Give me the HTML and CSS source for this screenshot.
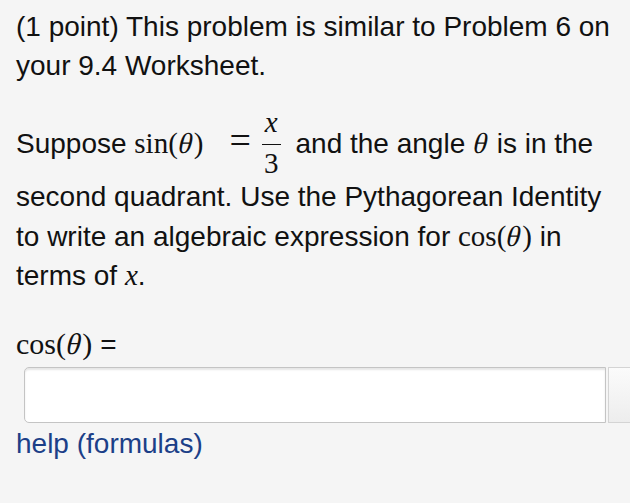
FILE: index.html
```html
<!DOCTYPE html>
<html>
<head>
<meta charset="utf-8">
<link rel="stylesheet" href="styles.css">
</head>
<body>
<div class="problem">
  <p class="para">(1 point) This problem is similar to Problem 6 on your 9.4 Worksheet.</p>
  <p class="para second">Suppose <span class="math">sin(<i class="theta">θ</i>)<span class="eq">=</span><span class="frac"><span class="num"><i>x</i></span><span class="den">3</span></span></span> and the angle <span class="math"><i class="theta">θ</i></span> is in the second quadrant. Use the Pythagorean Identity to write an algebraic expression for <span class="math">cos(<i class="theta">θ</i>)</span> in terms of <span class="math"><i>x</i></span>.</p>
  <div class="answer-label"><span class="math big">cos(<i class="theta">θ</i>)</span> =</div>
  <div class="answer-row">
    <input class="answer" type="text">
    <span class="side-btn"></span>
  </div>
  <a class="help" href="#">help (formulas)</a>
</div>
</body>
</html>
```
FILE: styles.css
```css
html, body {
  margin: 0;
  padding: 0;
  background: #f5f5f5;
  overflow: hidden;
}
body {
  font-family: "Liberation Sans", Arial, sans-serif;
  font-size: 28px;
  line-height: 38.5px;
  color: #111;
}
.problem {
  padding: 8px 0 0 16px;
  width: 596px;
}
.para {
  margin: 0;
}
.second {
  margin-top: 23px;
}
.math {
  font-family: "Liberation Serif", "Times New Roman", serif;
  font-size: 29px;
}
.math i {
  font-style: italic;
}
.theta {
  display: inline-block;
  transform: skewX(-14deg);
  font-style: normal !important;
  margin: 0 1px;
}
.eq {
  font-size: 38px;
  line-height: 0;
  margin: 0 11px 0 26px;
}
.frac {
  display: inline-flex;
  flex-direction: column;
  align-items: stretch;
  vertical-align: 21px;
  line-height: 29px;
  margin: 0 7px 0 0;
}
.num {
  text-align: center;
  padding: 0 3px 7px;
  border-bottom: 1.5px solid #111;
}
.den {
  text-align: center;
  padding-top: 4px;
}
.answer-label {
  margin-top: 29px;
}
.answer-label .big {
  font-size: 30px;
}
.answer-row {
  display: flex;
  margin-top: 3px;
  margin-left: 8px;
  height: 56px;
}
.answer {
  box-sizing: border-box;
  width: 582px;
  height: 56px;
  border: 1px solid #c4c4c4;
  border-radius: 5px 0 0 5px;
  background: #fff;
  box-shadow: inset 0 2px 2px rgba(0,0,0,0.1);
  flex: none;
  margin: 0;
}
.side-btn {
  flex: none;
  width: 40px;
  height: 56px;
  margin-left: 2px;
  box-sizing: border-box;
  border: 1px solid #d4d4d4;
  background: linear-gradient(#fbfbfb, #ededed);
}
.help {
  display: block;
  color: #1c3f88;
  text-decoration: none;
  margin-top: 2px;
  width: max-content;
}
```
